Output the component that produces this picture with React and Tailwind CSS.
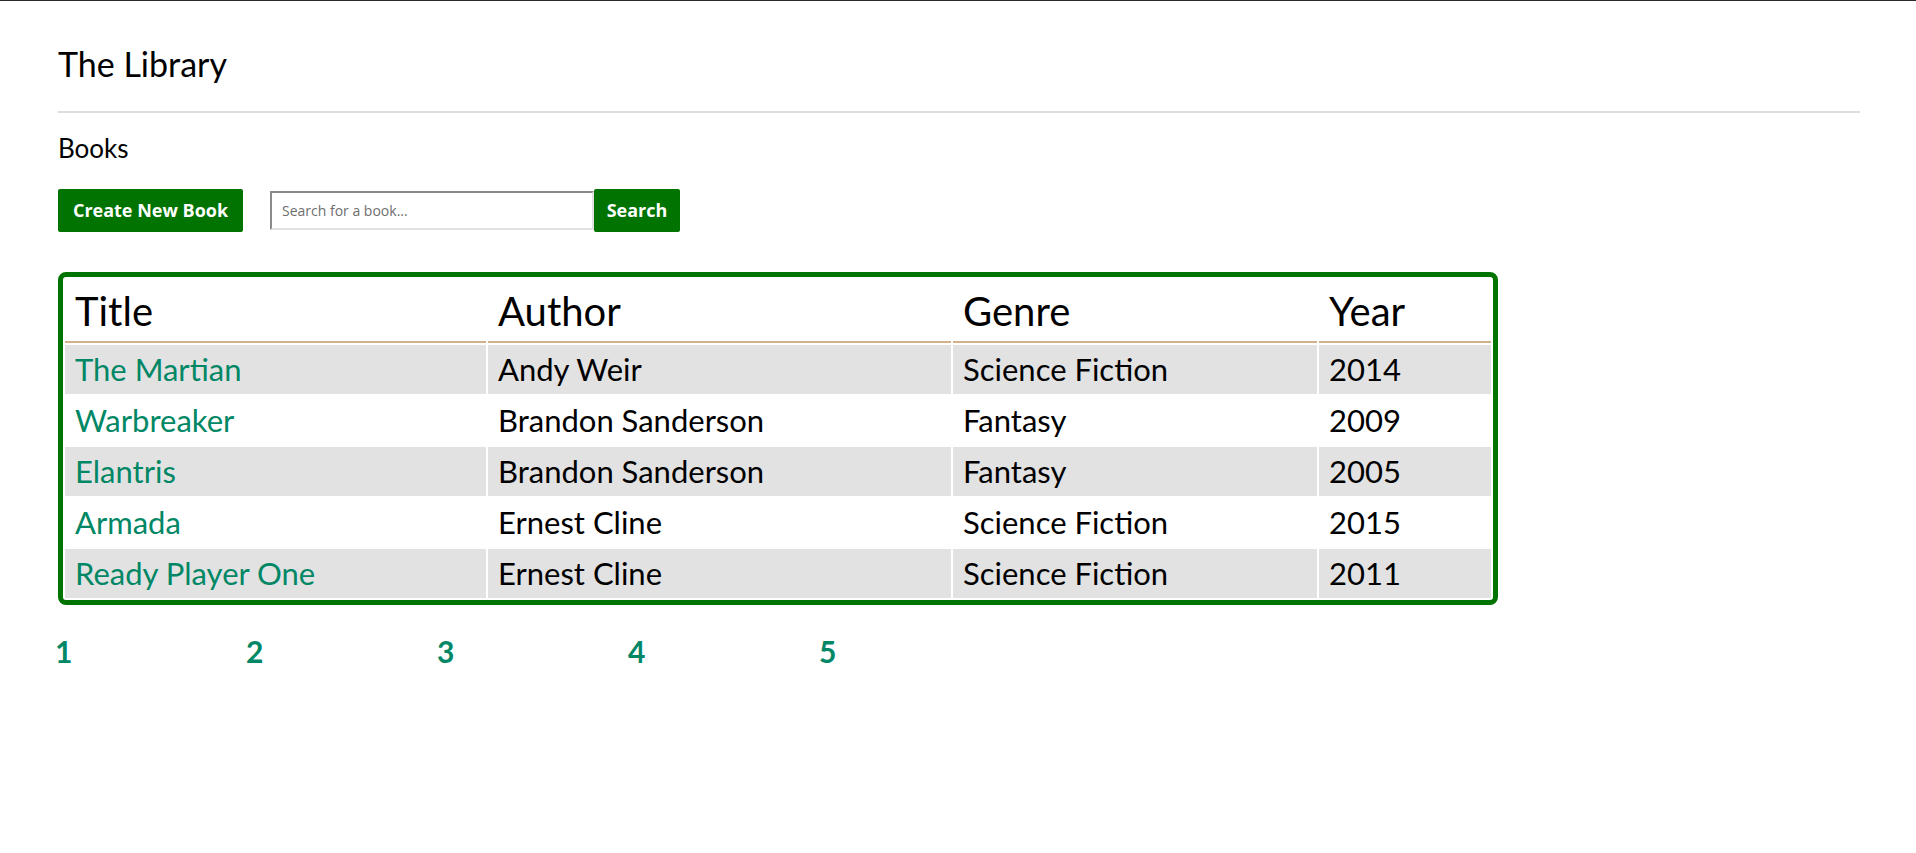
import React from "react";

const books = [
  { title: "The Martian", author: "Andy Weir", genre: "Science Fiction", year: 2014 },
  { title: "Warbreaker", author: "Brandon Sanderson", genre: "Fantasy", year: 2009 },
  { title: "Elantris", author: "Brandon Sanderson", genre: "Fantasy", year: 2005 },
  { title: "Armada", author: "Ernest Cline", genre: "Science Fiction", year: 2015 },
  { title: "Ready Player One", author: "Ernest Cline", genre: "Science Fiction", year: 2011 },
];

const pages = [1, 2, 3, 4, 5];

export default function App() {
  return (
    <div className="min-h-[853px] bg-white border-t border-[#2b2b2b] font-['Lato','Noto_Sans',sans-serif] text-black">
      <div className="pl-[58px] pr-[56px] w-[1916px]">
        <h1 className="mt-[43px] h-[40px] text-[34px] leading-[40px] font-normal">
          The Library
        </h1>
        <div className="mt-[27px] h-[2px] bg-[#dedede]" />
        <h2 className="mt-[19px] h-[32px] text-[26px] leading-[32px] font-normal">
          Books
        </h2>

        {/* toolbar */}
        <div className="mt-[25px] flex items-center">
          <button className="w-[185px] h-[43px] rounded-[2px] bg-[#007300] text-white text-[18px] font-bold font-['Open_Sans',sans-serif]">
            Create New Book
          </button>
          <input
            type="text"
            placeholder="Search for a book..."
            className="ml-[27px] w-[324px] h-[39px] px-[10px] border-2 border-t-[#8a8a8a] border-l-[#8a8a8a] border-b-[#e2e2e2] border-r-[#e2e2e2] text-[14px] font-['Open_Sans',sans-serif] placeholder:text-[#6e6e6e] outline-none"
          />
          <button className="w-[86px] h-[43px] rounded-[2px] bg-[#007300] text-white text-[18px] font-bold font-['Open_Sans',sans-serif]">
            Search
          </button>
        </div>

        {/* table */}
        <table className="mt-[40px] w-[1440px] table-fixed border-separate border-spacing-[2px] border-[5px] border-[#007300] rounded-[8px]">
          <colgroup>
            <col className="w-[421px]" />
            <col className="w-[463px]" />
            <col className="w-[364px]" />
            <col className="w-[172px]" />
          </colgroup>
          <thead>
            <tr>
              {["Title", "Author", "Genre", "Year"].map((h) => (
                <th
                  key={h}
                  className="text-left font-normal text-[40px] leading-[48px] pt-[8px] pb-[6px] px-[10px] border-b-2 border-[#d2b08c]"
                >
                  {h}
                </th>
              ))}
            </tr>
          </thead>
          <tbody>
            {books.map((b, i) => (
              <tr key={b.title} className={i % 2 === 0 ? "bg-[#e2e2e2]" : "bg-white"}>
                <td className="px-[10px] h-[49px] text-[31px] leading-[47px] text-[#008765]">
                  <a href="#">{b.title}</a>
                </td>
                <td className="px-[10px] h-[49px] text-[31px] leading-[47px]">{b.author}</td>
                <td className="px-[10px] h-[49px] text-[31px] leading-[47px]">{b.genre}</td>
                <td className="px-[10px] h-[49px] text-[31px] leading-[47px]">{b.year}</td>
              </tr>
            ))}
          </tbody>
        </table>

        {/* pagination */}
        <div className="mt-[28px] -ml-[3px] flex">
          {pages.map((p) => (
            <a
              key={p}
              href="#"
              className="w-[191px] text-[30px] leading-[36px] font-bold text-[#008765]"
            >
              {p}
            </a>
          ))}
        </div>
      </div>
    </div>
  );
}
